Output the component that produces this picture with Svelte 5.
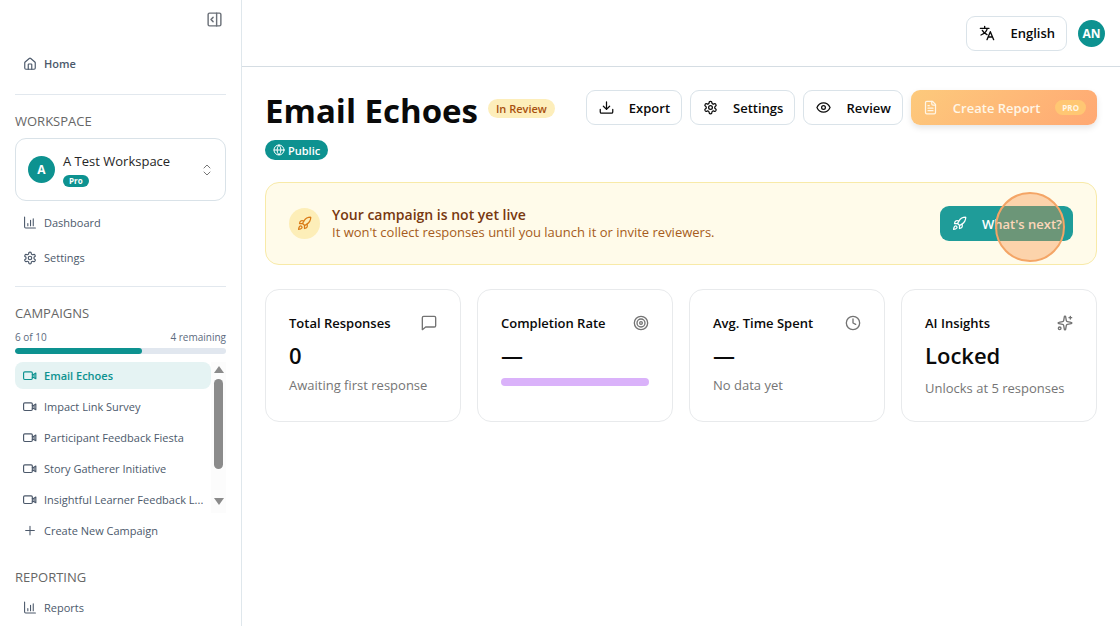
<script lang="ts">
  type Campaign = { name: string; active?: boolean };
  type Stat = {
    title: string;
    icon: string;
    value: string;
    note?: string;
    progress?: boolean;
    locked?: boolean;
  };

  const used = 6;
  const limit = 10;

  const campaigns: Campaign[] = [
    { name: 'Email Echoes', active: true },
    { name: 'Impact Link Survey' },
    { name: 'Participant Feedback Fiesta' },
    { name: 'Story Gatherer Initiative' },
    { name: 'Insightful Learner Feedback L...' }
  ];

  const actions = [
    { label: 'Export', icon: 'download' },
    { label: 'Settings', icon: 'settings' },
    { label: 'Review', icon: 'eye' }
  ];

  const stats: Stat[] = [
    { title: 'Total Responses', icon: 'message', value: '0', note: 'Awaiting first response' },
    { title: 'Completion Rate', icon: 'target', value: '—', progress: true },
    { title: 'Avg. Time Spent', icon: 'clock', value: '—', note: 'No data yet' },
    { title: 'AI Insights', icon: 'sparkles', value: 'Locked', note: 'Unlocks at 5 responses', locked: true }
  ];
</script>

{#snippet icon(name: string, size: number)}
  <svg
    width={size}
    height={size}
    viewBox="0 0 24 24"
    fill="none"
    stroke="currentColor"
    stroke-width="2"
    stroke-linecap="round"
    stroke-linejoin="round"
    aria-hidden="true"
  >
    {#if name === 'panel'}
      <rect x="3" y="3" width="18" height="18" rx="2" />
      <path d="M15 3v18M10 9l-3 3 3 3" />
    {:else if name === 'home'}
      <path d="M15 21v-8a1 1 0 0 0-1-1h-4a1 1 0 0 0-1 1v8" />
      <path d="M3 10a2 2 0 0 1 .7-1.5l7-6a2 2 0 0 1 2.6 0l7 6A2 2 0 0 1 21 10v9a2 2 0 0 1-2 2H5a2 2 0 0 1-2-2z" />
    {:else if name === 'chart'}
      <path d="M2 2v18a2 2 0 0 0 2 2h18M8 18v-4M13 18V8M18 18V5" />
    {:else if name === 'settings'}
      <path d="M12.2 2h-.4a2 2 0 0 0-2 2v.2a2 2 0 0 1-1 1.7l-.4.3a2 2 0 0 1-2 0l-.2-.1a2 2 0 0 0-2.7.7l-.2.4a2 2 0 0 0 .7 2.7l.2.1a2 2 0 0 1 1 1.7v.6a2 2 0 0 1-1 1.7l-.2.1a2 2 0 0 0-.7 2.7l.2.4a2 2 0 0 0 2.7.7l.2-.1a2 2 0 0 1 2 0l.4.3a2 2 0 0 1 1 1.7v.2a2 2 0 0 0 2 2h.4a2 2 0 0 0 2-2v-.2a2 2 0 0 1 1-1.7l.4-.3a2 2 0 0 1 2 0l.2.1a2 2 0 0 0 2.7-.7l.2-.4a2 2 0 0 0-.7-2.7l-.2-.1a2 2 0 0 1-1-1.7v-.6a2 2 0 0 1 1-1.7l.2-.1a2 2 0 0 0 .7-2.7l-.2-.4a2 2 0 0 0-2.7-.7l-.2.1a2 2 0 0 1-2 0l-.4-.3a2 2 0 0 1-1-1.7V4a2 2 0 0 0-2-2z" />
      <circle cx="12" cy="12" r="3" />
    {:else if name === 'video'}
      <rect x="1" y="5" width="15" height="13" rx="2" />
      <path d="M16 9.500l2 0 4-2.500v9.500l-4-2h-2M19 9v5" />
    {:else if name === 'plus'}
      <path d="M4 12h16M12 4v16" />
    {:else if name === 'updown'}
      <path d="M6 16l6 6 6-6M6 8l6-6 6 6" />
    {:else if name === 'translate'}
      <path d="M2 5h13M8.500 2v3M12.500 5c-1 4-4.500 8-9.500 10M5 8c1.500 3 4 5 7 6.500M12 22l5-12 5 12M14 18h6" />
    {:else if name === 'download'}
      <path d="M12 3v12M7 10l5 5 5-5M2 15v4a2 2 0 0 0 2 2h16a2 2 0 0 0 2-2v-4" />
    {:else if name === 'eye'}
      <path d="M1.500 12c2-4.500 5.800-7.500 10.500-7.500s8.500 3 10.500 7.500c-2 4.500-5.800 7.500-10.500 7.500S3.500 16.500 1.500 12z" />
      <circle cx="12" cy="12" r="3" />
    {:else if name === 'file'}
      <path d="M15 2H6a2 2 0 0 0-2 2v16a2 2 0 0 0 2 2h12a2 2 0 0 0 2-2V7z" />
      <path d="M14 2v4a2 2 0 0 0 2 2h4M10 9H8M16 13H8M16 17H8" />
    {:else if name === 'globe'}
      <circle cx="12" cy="12" r="10" />
      <path d="M12 2a14.500 14.500 0 0 0 0 20 14.500 14.500 0 0 0 0-20M2 12h20" />
    {:else if name === 'rocket'}
      <path d="M4.500 16.500c-1.500 1.260-2 5-2 5s3.740-.5 5-2c.710-.840.700-2.130-.09-2.910a2.180 2.180 0 0 0-2.910-.09z" />
      <path d="M12 15l-3-3a22 22 0 0 1 2-3.950A12.880 12.880 0 0 1 22 2c0 2.720-.780 7.500-6 11a22.350 22.350 0 0 1-4 2z" />
      <path d="M9 12H4s.550-3.030 2-4c1.620-1.080 5 0 5 0M12 15v5s3.030-.550 4-2c1.080-1.620 0-5 0-5" />
    {:else if name === 'message'}
      <path d="M22 4v12a2 2 0 0 1-2 2H7l-5 4V4a2 2 0 0 1 2-2h16a2 2 0 0 1 2 2z" />
    {:else if name === 'target'}
      <circle cx="12" cy="12" r="10" />
      <circle cx="12" cy="12" r="6" />
      <circle cx="12" cy="12" r="2" />
    {:else if name === 'clock'}
      <circle cx="12" cy="12" r="10" />
      <path d="M12 6v6l4 2" />
    {:else if name === 'sparkles'}
      <path d="M11 2.800a1 1 0 0 1 2 0l1 5.600a2 2 0 0 0 1.600 1.600l5.600 1a1 1 0 0 1 0 2l-5.600 1a2 2 0 0 0-1.600 1.600l-1 5.600a1 1 0 0 1-2 0l-1-5.600a2 2 0 0 0-1.600-1.600l-5.600-1a1 1 0 0 1 0-2l5.600-1a2 2 0 0 0 1.600-1.600z" />
      <path d="M20 2v4M22 4h-4" />
      <circle cx="4" cy="20" r="2" />
    {/if}
  </svg>
{/snippet}

<div class="app">
  <aside class="sidebar">
    <div class="sidebar-top">
      <button class="icon-btn" aria-label="Collapse sidebar">{@render icon('panel', 17)}</button>
    </div>

    <nav>
      <a class="nav-link home" href="#home">{@render icon('home', 14)}<span>Home</span></a>
    </nav>

    <hr />

    <h2>Workspace</h2>
    <button class="workspace">
      <span class="avatar">A</span>
      <span class="workspace-info">
        <span class="workspace-name">A Test Workspace</span>
        <span class="plan">Pro</span>
      </span>
      {@render icon('updown', 12)}
    </button>
    <nav class="workspace-nav">
      <a class="nav-link" href="#dashboard">{@render icon('chart', 13)}<span>Dashboard</span></a>
      <a class="nav-link" href="#settings">{@render icon('settings', 14)}<span>Settings</span></a>
    </nav>

    <hr class="tight" />

    <h2>Campaigns</h2>
    <div class="usage">
      <span>{used} of {limit}</span>
      <span>{limit - used} remaining</span>
    </div>
    <div class="usage-bar">
      <div class="usage-fill" style="width:{(used / limit) * 100}%"></div>
    </div>
    <div class="campaigns">
      <nav class="campaign-list">
        {#each campaigns as c}
          <a class="nav-link compact" class:active={c.active} href="#campaign">
            {@render icon('video', 14)}<span>{c.name}</span>
          </a>
        {/each}
      </nav>
      <div class="scrollbar" aria-hidden="true">
        <span class="arrow up"></span>
        <span class="thumb"></span>
        <span class="arrow down"></span>
      </div>
    </div>
    <a class="nav-link compact create" href="#new">{@render icon('plus', 13)}<span>Create New Campaign</span></a>

    <h2 class="reporting">Reporting</h2>
    <nav>
      <a class="nav-link" href="#reports">{@render icon('chart', 13)}<span>Reports</span></a>
    </nav>
  </aside>

  <div class="content">
    <header class="topbar">
      <button class="btn">{@render icon('translate', 16)}English</button>
      <button class="avatar" aria-label="Account">AN</button>
    </header>

    <main>
      <div class="page-head">
        <div class="title-block">
          <div class="title-row">
            <h1>Email Echoes</h1>
            <span class="status">In Review</span>
          </div>
          <span class="public">{@render icon('globe', 12)}Public</span>
        </div>
        <div class="actions">
          {#each actions as a}
            <button class="btn">{@render icon(a.icon, 15)}{a.label}</button>
          {/each}
          <button class="btn report">
            {@render icon('file', 15)}Create Report<span class="pro">PRO</span>
          </button>
        </div>
      </div>

      <section class="banner">
        <span class="banner-icon">{@render icon('rocket', 15)}</span>
        <div class="banner-text">
          <h3>Your campaign is not yet live</h3>
          <p>It won't collect responses until you launch it or invite reviewers.</p>
        </div>
        <button class="btn next">
          {@render icon('rocket', 15)}What's next?
          <span class="click-ring"></span>
        </button>
      </section>

      <section class="stats">
        {#each stats as s}
          <article class="card">
            <div class="card-head">
              <h3>{s.title}</h3>
              {@render icon(s.icon, 16)}
            </div>
            <div class="value">{s.value}</div>
            {#if s.progress}
              <div class="rate-bar"></div>
            {:else}
              <p class:locked={s.locked}>{s.note}</p>
            {/if}
          </article>
        {/each}
      </section>
    </main>
  </div>
</div>

<style>
  :global(body) {
    margin: 0;
    background: #fff;
  }

  .app {
    --teal: #0d9290;
    --line: #dfe7ec;
    --slate: #4c596b;
    display: flex;
    min-height: 100vh;
    font-family: 'Open Sans', 'Noto Sans', sans-serif;
    font-size: 13px;
    color: #0a0a0a;
  }

  .app * {
    box-sizing: border-box;
  }

  h1, h2, h3, p {
    margin: 0;
  }

  button {
    font: inherit;
    color: inherit;
    cursor: pointer;
  }

  svg {
    flex: none;
    display: block;
  }

  /* sidebar */
  .sidebar {
    flex: none;
    width: 242px;
    padding: 0 15px;
    border-right: 1px solid var(--line);
  }

  .sidebar-top {
    display: flex;
    justify-content: flex-end;
    align-items: center;
    height: 38px;
    margin-bottom: 8px;
    padding-right: 3px;
  }

  .icon-btn {
    padding: 0;
    border: none;
    background: none;
    color: #6b7078;
  }

  .nav-link {
    display: flex;
    align-items: center;
    gap: 7px;
    height: 35px;
    padding: 0 2px 0 8px;
    border-radius: 8px;
    font-size: 11px;
    color: var(--slate);
    text-decoration: none;
  }

  .nav-link svg {
    width: 14px;
  }

  .nav-link span {
    overflow: hidden;
    text-overflow: ellipsis;
    white-space: nowrap;
  }

  .nav-link.home {
    font-weight: 600;
  }

  .nav-link.compact {
    height: 27px;
  }

  .nav-link.active {
    background: #e5f3f3;
    color: var(--teal);
    font-weight: 600;
  }

  hr {
    height: 1px;
    margin: 13px 0 16px;
    border: none;
    background: #e2e8ee;
  }

  hr.tight {
    margin-top: 11px;
  }

  h2 {
    font-size: 13px;
    line-height: 20px;
    font-weight: 500;
    text-transform: uppercase;
    color: #666;
  }

  .workspace {
    display: flex;
    align-items: center;
    gap: 8px;
    width: 100%;
    height: 63px;
    margin-top: 7px;
    padding: 0 12px;
    border: 1px solid #d9e2e8;
    border-radius: 11px;
    background: #fff;
    text-align: left;
  }

  .workspace svg {
    color: #777;
  }

  .avatar {
    flex: none;
    display: flex;
    align-items: center;
    justify-content: center;
    width: 27px;
    height: 27px;
    padding: 0;
    border: none;
    border-radius: 50%;
    background: var(--teal);
    color: #fff;
    font-size: 12px;
    font-weight: 700;
  }

  .workspace-info {
    flex: 1;
    display: flex;
    flex-direction: column;
    align-items: flex-start;
    gap: 5px;
  }

  .workspace-name {
    line-height: 18px;
    color: #262626;
  }

  .plan {
    padding: 0 6px;
    border-radius: 6px;
    background: var(--teal);
    color: #fff;
    font-size: 8px;
    line-height: 12px;
    font-weight: 700;
  }

  .workspace-nav {
    margin-top: 4px;
  }

  .usage {
    display: flex;
    justify-content: space-between;
    margin: 6px 0 3px;
    font-size: 10px;
    line-height: 16px;
    color: #5c6a7e;
  }

  .usage-bar {
    height: 6px;
    border-radius: 3px;
    background: #e1e7ef;
    overflow: hidden;
  }

  .usage-fill {
    height: 100%;
    border-radius: 3px;
    background: var(--teal);
  }

  .campaigns {
    display: flex;
    margin-top: 8px;
  }

  .campaign-list {
    flex: 1;
    min-width: 0;
    display: flex;
    flex-direction: column;
    gap: 4px;
  }

  .scrollbar {
    display: flex;
    flex-direction: column;
    align-items: center;
    width: 15px;
    padding: 4px 0 8px;
    background: #fcfcfc;
  }

  .thumb {
    width: 9px;
    height: 90px;
    margin-top: 6px;
    border-radius: 5px;
    background: #8b8b8b;
  }

  .arrow {
    border: 5px solid transparent;
  }

  .arrow.up {
    border-top: none;
    border-bottom: 7px solid #8b8b8b;
  }

  .arrow.down {
    margin-top: auto;
    border-bottom: none;
    border-top: 7px solid #8b8b8b;
  }

  .create {
    margin-top: 4px;
  }

  .reporting {
    margin: 23px 0 3px;
  }

  /* main column */
  .content {
    flex: 1;
    min-width: 0;
  }

  .topbar {
    display: flex;
    justify-content: flex-end;
    align-items: center;
    gap: 11px;
    height: 67px;
    padding: 0 15px;
    border-bottom: 1px solid #d5dde3;
  }

  .btn {
    display: flex;
    align-items: center;
    gap: 15px;
    height: 35px;
    padding: 0 11px 0 12px;
    border: 1px solid #dae3e9;
    border-radius: 9px;
    background: #fff;
    font-size: 13px;
    font-weight: 600;
    white-space: nowrap;
  }

  main {
    padding: 23px 23px 24px;
  }

  .page-head {
    display: flex;
    justify-content: space-between;
    align-items: flex-start;
  }

  .title-row {
    display: flex;
    align-items: flex-start;
    gap: 10px;
  }

  h1 {
    font-size: 33px;
    line-height: 42px;
    font-weight: 700;
    white-space: nowrap;
  }

  .status {
    margin-top: 9px;
    padding: 0 8px;
    border-radius: 10px;
    background: #fdeebb;
    color: #a8500f;
    font-size: 11px;
    line-height: 19px;
    font-weight: 600;
    white-space: nowrap;
  }

  .public {
    display: inline-flex;
    align-items: center;
    gap: 3px;
    height: 20px;
    margin-top: 8px;
    padding: 0 8px;
    border-radius: 10px;
    background: var(--teal);
    color: #fff;
    font-size: 11px;
    font-weight: 600;
  }

  .actions {
    display: flex;
    gap: 8px;
  }

  .report {
    border: none;
    background: linear-gradient(135deg, #fdca7c, #ffa873);
    color: #fff6e6;
    box-shadow: 0 3px 6px rgba(0, 0, 0, 0.1);
  }

  .pro {
    padding: 0 7px;
    border-radius: 8px;
    background: #ffc773;
    font-size: 8px;
    line-height: 15px;
    font-weight: 700;
  }

  .banner {
    display: flex;
    align-items: center;
    gap: 12px;
    height: 83px;
    margin-top: 22px;
    padding: 0 23px;
    border: 1px solid #f8eaa8;
    border-radius: 14px;
    background: #fffbea;
  }

  .banner-icon {
    flex: none;
    display: flex;
    align-items: center;
    justify-content: center;
    width: 31px;
    height: 31px;
    border-radius: 50%;
    background: #fdeeb8;
    color: #d97a16;
  }

  .banner-text {
    flex: 1;
  }

  .banner h3 {
    font-size: 14px;
    line-height: 17px;
    font-weight: 600;
    color: #78380f;
  }

  .banner p {
    font-size: 13px;
    line-height: 18px;
    color: #a65b20;
  }

  .next {
    position: relative;
    border: none;
    background: #1f9c99;
    color: #fff;
  }

  /* click highlight drawn over the button */
  .click-ring {
    position: absolute;
    top: -14px;
    right: 8px;
    width: 70px;
    height: 70px;
    border: 2px solid #f4a566;
    border-radius: 50%;
    background: rgba(246, 142, 62, 0.36);
    pointer-events: none;
  }

  .stats {
    display: grid;
    grid-template-columns: repeat(4, 1fr);
    gap: 16px;
    margin-top: 24px;
  }

  .card {
    min-height: 133px;
    padding: 23px;
    border: 1px solid #e8eaec;
    border-radius: 14px;
  }

  .card-head {
    display: flex;
    justify-content: space-between;
    align-items: center;
    height: 20px;
    color: #737373;
  }

  .card-head h3 {
    font-size: 13px;
    line-height: 20px;
    font-weight: 600;
    color: #0a0a0a;
  }

  .value {
    margin-top: 8px;
    font-size: 22px;
    line-height: 29px;
    font-weight: 600;
  }

  .card p {
    margin-top: 5px;
    font-size: 13px;
    line-height: 20px;
    color: #757575;
  }

  .card p.locked {
    margin-top: 8px;
  }

  .rate-bar {
    height: 8px;
    margin-top: 8px;
    border-radius: 4px;
    background: #dab2fa;
  }
</style>
